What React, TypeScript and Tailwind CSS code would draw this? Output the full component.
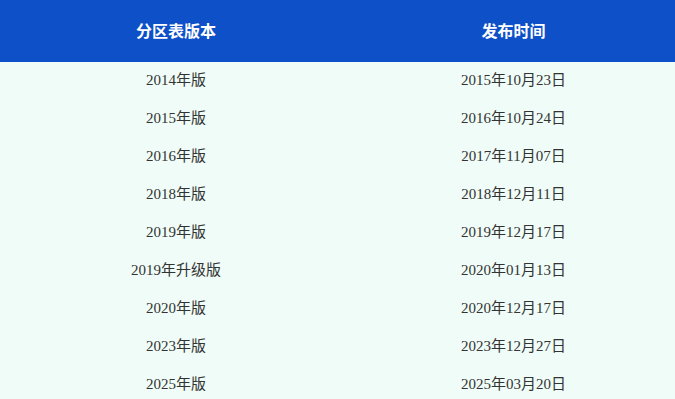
import React from 'react';

const versions: [string, string][] = [
    ['2014年版', '2015年10月23日'],
    ['2015年版', '2016年10月24日'],
    ['2016年版', '2017年11月07日'],
    ['2018年版', '2018年12月11日'],
    ['2019年版', '2019年12月17日'],
    ['2019年升级版', '2020年01月13日'],
    ['2020年版', '2020年12月17日'],
    ['2023年版', '2023年12月27日'],
    ['2025年版', '2025年03月20日'],
];

export default function App() {
    return (
        <div className="min-h-screen w-full bg-[#effcf7]">
            {/* Table header */}
            <div
                className="grid h-[62px] grid-cols-[352px_1fr] items-center bg-[#0e50c8] pb-[3px] text-[16px] font-bold text-white"
                style={{ fontFamily: '"Noto Sans CJK SC", sans-serif' }}
            >
                <div className="text-center">分区表版本</div>
                <div className="text-center">发布时间</div>
            </div>

            {/* Rows */}
            <div
                className="text-[15px] text-[#333333]"
                style={{ fontFamily: '"Liberation Serif", "Noto Sans CJK SC", serif' }}
            >
                {versions.map(([name, date]) => (
                    <div key={name} className="grid h-[38px] grid-cols-[352px_1fr] items-center pb-[2px]">
                        <div className="text-center">{name}</div>
                        <div className="text-center">{date}</div>
                    </div>
                ))}
            </div>
        </div>
    );
}
